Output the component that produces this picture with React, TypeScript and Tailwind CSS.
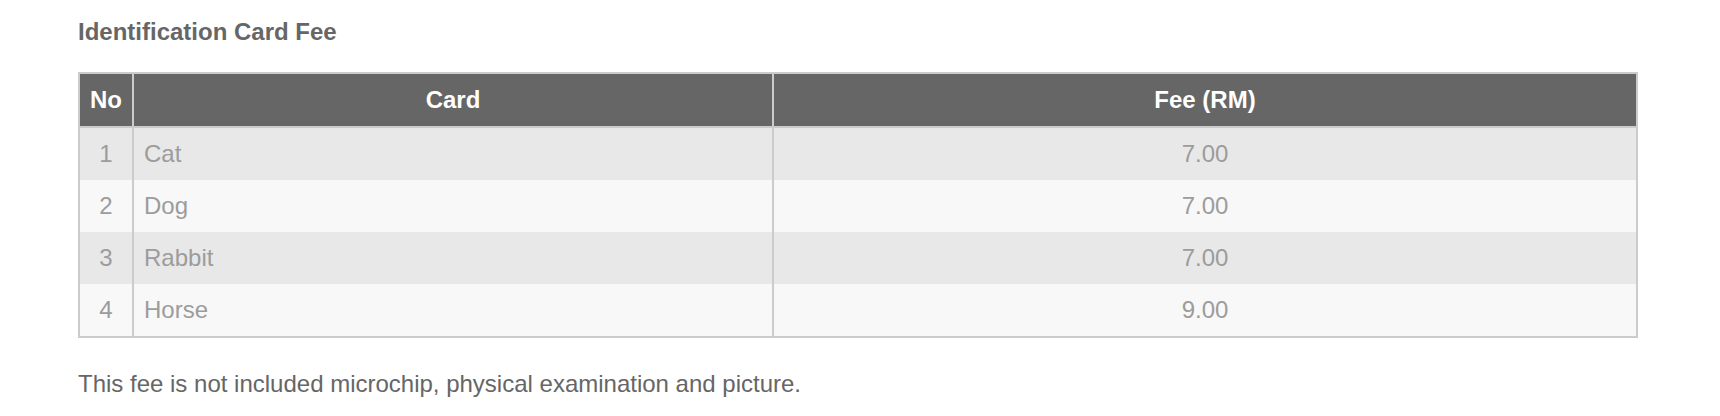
const rows = [
  { no: 1, card: 'Cat', fee: '7.00' },
  { no: 2, card: 'Dog', fee: '7.00' },
  { no: 3, card: 'Rabbit', fee: '7.00' },
  { no: 4, card: 'Horse', fee: '9.00' },
];

export default function App() {
  return (
    <div className="min-h-[416px] bg-white pl-[78px] pt-[18px] font-['Liberation_Sans',Arial,sans-serif] text-[24px]">
      <h2 className="mb-[26px] text-[24px] font-bold leading-[28px] text-[#666]">
        Identification Card Fee
      </h2>

      {/* Fee table */}
      <div className="w-[1560px] border-2 border-[#ccc]">
        <table className="w-full table-fixed border-separate border-spacing-0">
          <colgroup>
            <col className="w-[52px]" />
            <col className="w-[640px]" />
            <col />
          </colgroup>
          <thead>
            <tr className="bg-[#666] text-white">
              <th className="h-[54px] border-b-2 border-[#ccc] text-center font-bold">No</th>
              <th className="h-[54px] border-b-2 border-l-2 border-[#ccc] text-center font-bold">Card</th>
              <th className="h-[54px] border-b-2 border-l-2 border-[#ccc] text-center font-bold">Fee (RM)</th>
            </tr>
          </thead>
          <tbody>
            {rows.map((row, i) => (
              <tr key={row.no} className={i % 2 === 0 ? 'bg-[#e8e8e8]' : 'bg-[#f8f8f8]'}>
                <td className="h-[52px] text-center text-[#9c9c9c]">{row.no}</td>
                <td className="h-[52px] border-l-2 border-[#ccc] pl-[10px] text-left text-[#9c9c9c]">{row.card}</td>
                <td className="h-[52px] border-l-2 border-[#ccc] text-center text-[#9c9c9c]">{row.fee}</td>
              </tr>
            ))}
          </tbody>
        </table>
      </div>

      <p className="mt-[32px] leading-[28px] text-[#666]">
        This fee is not included microchip, physical examination and picture.
      </p>
    </div>
  );
}
